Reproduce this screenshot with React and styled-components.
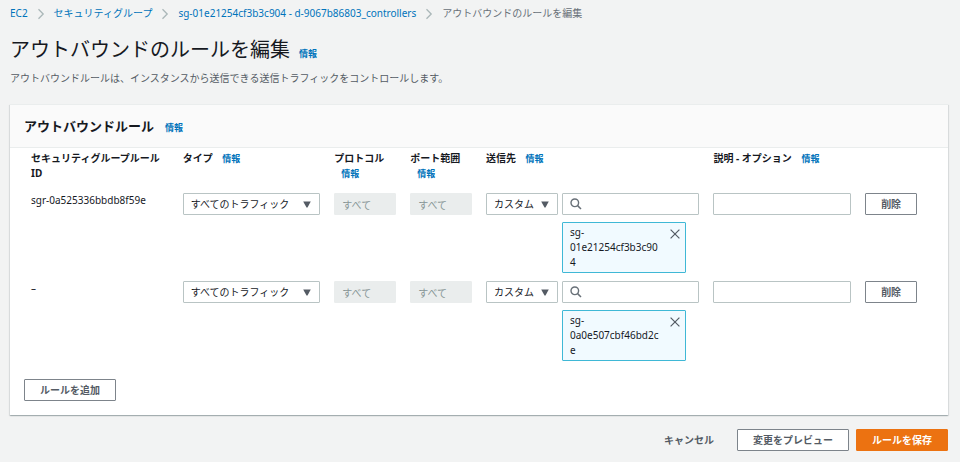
import React, { useState } from "react";
import styled, { createGlobalStyle } from "styled-components";

const initialRules = [
  { id: "sgr-0a525336bbdb8f59e", group: "sg-01e21254cf3b3c904" },
  { id: "–", group: "sg-0a0e507cbf46bd2ce" },
];

const breadcrumbs = [
  "EC2",
  "セキュリティグループ",
  "sg-01e21254cf3b3c904 - d-9067b86803_controllers",
];

function Chevron() {
  return (
    <svg width="8" height="12" viewBox="0 0 8 12" aria-hidden="true">
      <path d="M1.5 1.2 6.2 6 1.5 10.8" fill="none" stroke="#aab7b8" strokeWidth="1.3" />
    </svg>
  );
}

function SearchIcon() {
  return (
    <svg width="12" height="12" viewBox="0 0 12 12" aria-hidden="true">
      <circle cx="4.8" cy="4.8" r="3.8" fill="none" stroke="#687078" strokeWidth="1.4" />
      <path d="M7.6 7.6 11 11" stroke="#687078" strokeWidth="1.5" />
    </svg>
  );
}

function CloseIcon() {
  return (
    <svg width="10" height="10" viewBox="0 0 10 10" aria-hidden="true">
      <path d="M.6.6 9.4 9.4M9.4.6.6 9.4" fill="none" stroke="#545b64" strokeWidth="1.2" />
    </svg>
  );
}

function Dropdown({ label, value }) {
  return (
    <SelectBox>
      <Select aria-label={label} defaultValue={value}>
        <option>{value}</option>
      </Select>
      <svg width="8" height="7" viewBox="0 0 8 7" aria-hidden="true">
        <path d="M.2.4h7.6L4.6 6.3q-.6.9-1.2 0z" fill="#545b64" />
      </svg>
    </SelectBox>
  );
}

function RuleRow({ rule, onDelete }) {
  return (
    <tr>
      <td>{rule.id}</td>
      <td>
        <Dropdown label="タイプ" value="すべてのトラフィック" />
      </td>
      <td>
        <TextInput aria-label="プロトコル" value="すべて" disabled />
      </td>
      <td>
        <TextInput aria-label="ポート範囲" value="すべて" disabled />
      </td>
      <td>
        <Destination>
          <Dropdown label="送信先" value="カスタム" />
          <div>
            <SearchBox>
              <SearchIcon />
              <TextInput type="search" aria-label="送信先" $search />
            </SearchBox>
            <Token>
              <span>{rule.group}</span>
              <button type="button" aria-label={rule.group}>
                <CloseIcon />
              </button>
            </Token>
          </div>
        </Destination>
      </td>
      <td>
        <TextInput aria-label="説明 - オプション" />
      </td>
      <td>
        <Button type="button" onClick={onDelete}>
          削除
        </Button>
      </td>
    </tr>
  );
}

function App() {
  const [rules, setRules] = useState(initialRules);

  const handleDelete = (i) => {
    setRules(rules.filter((_, index) => index !== i));
  };

  return (
    <Page>
      <GlobalStyle />
      <Breadcrumb>
        {breadcrumbs.map((item) => (
          <React.Fragment key={item}>
            <a href="#">{item}</a>
            <Chevron />
          </React.Fragment>
        ))}
        <span>アウトバウンドのルールを編集</span>
      </Breadcrumb>
      <Heading>
        <h1>アウトバウンドのルールを編集</h1>
        <InfoLink href="#">情報</InfoLink>
      </Heading>
      <Description>
        アウトバウンドルールは、インスタンスから送信できる送信トラフィックをコントロールします。
      </Description>
      <Panel>
        <PanelHeader>
          <h2>アウトバウンドルール</h2>
          <InfoLink href="#">情報</InfoLink>
        </PanelHeader>
        <PanelBody>
          <RuleTable>
            <colgroup>
              <Col $span={2} />
              <Col $span={2} />
              <Col $span={1} />
              <Col $span={1} />
              <Col $span={3} />
              <Col $span={2} />
              <Col $span={1} />
            </colgroup>
            <thead>
              <tr>
                <th>セキュリティグループルール ID</th>
                <th>
                  タイプ <InfoLink href="#">情報</InfoLink>
                </th>
                <th>
                  プロトコル <InfoLink href="#">情報</InfoLink>
                </th>
                <th>
                  ポート範囲 <InfoLink href="#">情報</InfoLink>
                </th>
                <th>
                  送信先 <InfoLink href="#">情報</InfoLink>
                </th>
                <th>
                  説明 - オプション <InfoLink href="#">情報</InfoLink>
                </th>
                <td />
              </tr>
            </thead>
            <tbody>
              {rules.map((rule, i) => (
                <RuleRow key={rule.group} rule={rule} onDelete={() => handleDelete(i)} />
              ))}
            </tbody>
          </RuleTable>
          <Button type="button">ルールを追加</Button>
        </PanelBody>
      </Panel>
      <Actions>
        <Button type="button" $variant="link">
          キャンセル
        </Button>
        <Button type="button">変更をプレビュー</Button>
        <Button type="button" $variant="primary">
          ルールを保存
        </Button>
      </Actions>
    </Page>
  );
}

const GlobalStyle = createGlobalStyle`
  * {
    box-sizing: border-box;
  }
  body {
    margin: 0;
    background-color: #f2f3f3;
    color: #16191f;
  }
  body, button, input, select {
    font-family: "Noto Sans", "Noto Sans CJK JP", sans-serif;
    font-size: 10px;
    line-height: 15px;
  }
  a {
    color: #0073bb;
    text-decoration: none;
  }
`;

const Page = styled.main`
  padding: 6px 12px 10px 10px;
`;

const Breadcrumb = styled.nav`
  display: flex;
  align-items: center;
  gap: 9px;
  color: #687078;
`;

const InfoLink = styled.a`
  display: inline-block;
  margin-left: 7px;
  font-size: 9px;
  font-weight: 700;
`;

const Heading = styled.div`
  display: flex;
  align-items: baseline;
  margin-top: 14px;
  h1 {
    margin: 0 2px 0 0;
    font-size: 20px;
    font-weight: 400;
    line-height: 30px;
  }
`;

const Description = styled.p`
  margin: 6px 0 0;
  color: #545b64;
`;

const Panel = styled.section`
  margin-top: 18px;
  background-color: #fff;
  border-top: 1px solid #eaeded;
  box-shadow: 0 1px 1px rgba(0, 28, 36, 0.2), 1px 1px 1px rgba(0, 28, 36, 0.08),
    -1px 1px 1px rgba(0, 28, 36, 0.08);
`;

const PanelHeader = styled.header`
  display: flex;
  align-items: baseline;
  padding: 11px 14px;
  background-color: #fafafa;
  border-bottom: 1px solid #eaeded;
  h2 {
    margin: 0 4px 0 0;
    font-size: 13px;
    font-weight: 700;
    line-height: 20px;
  }
`;

const PanelBody = styled.div`
  padding: 0 14px 14px;
`;

const RuleTable = styled.table`
  width: 100%;
  table-layout: fixed;
  border-collapse: collapse;
  margin-bottom: 10px;
  th,
  td {
    padding: 0 7px 8px;
    text-align: left;
    vertical-align: top;
  }
  th {
    padding: 3px 7px 12px;
  }
`;

const Col = styled.col`
  width: ${({ $span }) => ($span / 12) * 100}%;
`;

const SelectBox = styled.div`
  position: relative;
  svg {
    position: absolute;
    right: 9px;
    top: 8px;
    pointer-events: none;
  }
`;

const Select = styled.select`
  display: block;
  width: 100%;
  height: 22px;
  padding: 0 18px 0 7px;
  appearance: none;
  border: 1px solid #b9c4c4;
  border-radius: 1px;
  background-color: #fff;
  color: #16191f;
`;

const TextInput = styled.input`
  display: block;
  width: 100%;
  height: 22px;
  padding: 0 7px 0 ${({ $search }) => ($search ? "24px" : "7px")};
  border: 1px solid #b9c4c4;
  border-radius: 1px;
  background-color: #fff;
  color: #16191f;
  &:disabled {
    border-color: #eaeded;
    background-color: #eaeded;
    color: #879596;
  }
`;

const SearchBox = styled.div`
  position: relative;
  svg {
    position: absolute;
    left: 8px;
    top: 5px;
  }
`;

const Destination = styled.div`
  display: grid;
  grid-template-columns: 72px 1fr;
  gap: 4px;
`;

const Token = styled.div`
  display: flex;
  align-items: flex-start;
  justify-content: space-between;
  width: 90%;
  margin-top: 7px;
  padding: 2px 5px 2px 7px;
  border: 1px solid #3fb8d6;
  border-radius: 1px;
  background-color: #f1faff;
  span {
    flex: 1;
    overflow-wrap: anywhere;
  }
  button {
    display: flex;
    margin: 4px 0 0 9px;
    padding: 0;
    border: 0;
    background: none;
  }
`;

const variants = {
  normal: { color: "#545b64", border: "#7d848b", background: "#fff" },
  link: { color: "#545b64", border: "transparent", background: "transparent" },
  primary: { color: "#fff", border: "#ec7211", background: "#ec7211" },
};

const Button = styled.button`
  height: 22px;
  padding: 0 15px;
  border: 1px solid ${({ $variant = "normal" }) => variants[$variant].border};
  border-radius: 1px;
  background-color: ${({ $variant = "normal" }) => variants[$variant].background};
  color: ${({ $variant = "normal" }) => variants[$variant].color};
  font-weight: 700;
  white-space: nowrap;
  cursor: pointer;
`;

const Actions = styled.footer`
  display: flex;
  justify-content: flex-end;
  gap: 7px;
  margin-top: 14px;
`;

export default App;
